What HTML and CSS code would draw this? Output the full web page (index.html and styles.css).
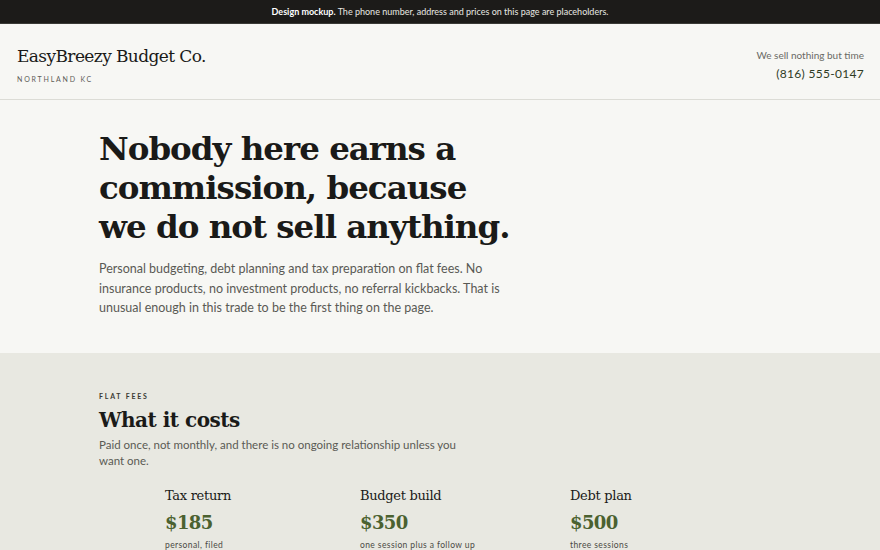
FILE: index.html
```html
<!DOCTYPE html>
<html lang="en">
<head>
  <meta charset="UTF-8">
  <meta name="viewport" content="width=device-width, initial-scale=1.0">
  <title>EasyBreezy Budget Co.</title>
  <link rel="stylesheet" href="styles.css">
</head>
<body>
  <div class="notice"><strong>Design mockup.</strong> The phone number, address and prices on this page are placeholders.</div>

  <header class="site-header">
    <div class="brand">
      <div class="brand-name">EasyBreezy Budget Co.</div>
      <div class="brand-place">Northland KC</div>
    </div>
    <div class="contact">
      <div class="tagline">We sell nothing but time</div>
      <div class="phone">(816) 555-0147</div>
    </div>
  </header>

  <section class="hero">
    <div class="container">
      <h1>Nobody here earns a commission, because we do not sell anything.</h1>
      <p class="lead">Personal budgeting, debt planning and tax preparation on flat fees. No insurance products, no investment products, no referral kickbacks. That is unusual enough in this trade to be the first thing on the page.</p>
    </div>
  </section>

  <section class="fees">
    <div class="container">
      <div class="eyebrow">Flat fees</div>
      <h2>What it costs</h2>
      <p class="intro">Paid once, not monthly, and there is no ongoing relationship unless you want one.</p>

      <div class="price-list">
        <div class="price">
          <h3>Tax return</h3>
          <div class="amount">$185</div>
          <div class="note">personal, filed</div>
        </div>
        <div class="price">
          <h3>Budget build</h3>
          <div class="amount">$350</div>
          <div class="note">one session plus a follow up</div>
        </div>
        <div class="price">
          <h3>Debt plan</h3>
          <div class="amount">$500</div>
          <div class="note">three sessions</div>
        </div>
      </div>
    </div>
  </section>
</body>
</html>
```

FILE: styles.css
```css
body {
  margin: 0;
  font-family: Lato, 'Open Sans', sans-serif;
  background: #f7f7f4;
  color: #1c1c1a;
}

.notice {
  height: 24px;
  line-height: 24px;
  background: #1c1b19;
  border-bottom: 1px solid #3a3a36;
  box-sizing: border-box;
  color: #e8e8e2;
  font-size: 9px;
  text-align: center;
}

.notice strong {
  color: #ffffff;
}

.site-header {
  display: flex;
  justify-content: space-between;
  align-items: center;
  height: 75px;
  padding: 0 16px 0 17px;
  border-bottom: 1px solid #dcdcd6;
}

.brand {
  margin-top: 5px;
}

.brand-name {
  font-family: 'DejaVu Serif', serif;
  font-size: 17px;
  letter-spacing: -0.6px;
  color: #1a1a18;
}

.brand-place {
  margin-top: 9px;
  font-size: 7px;
  letter-spacing: 1.8px;
  text-transform: uppercase;
  color: #5e5e58;
}

.contact {
  margin-top: 6px;
  text-align: right;
}

.tagline {
  font-size: 10px;
  color: #6a6a64;
}

.phone {
  margin-top: 5px;
  font-size: 12px;
  letter-spacing: 0.3px;
  color: #2f3b24;
}

.container {
  max-width: 682px;
  margin: 0 auto;
}

.hero {
  padding: 29px 0 35px;
}

.hero h1 {
  margin: 0;
  max-width: 416px;
  font-family: 'DejaVu Serif', serif;
  font-size: 32.5px;
  line-height: 39px;
  letter-spacing: -1px;
  font-weight: bold;
  color: #1a1a18;
}

.lead {
  margin: 13px 0 0;
  max-width: 405px;
  font-size: 12.5px;
  line-height: 19.5px;
  color: #5a5a54;
}

.fees {
  background: #e8e8e1;
  padding: 39px 0 20px;
}

.eyebrow {
  font-size: 7px;
  font-weight: 700;
  letter-spacing: 1.8px;
  text-transform: uppercase;
  color: #3a3a34;
}

.fees h2 {
  margin: 8px 0 0;
  font-family: 'DejaVu Serif', serif;
  font-size: 20px;
  letter-spacing: -0.5px;
  color: #1a1a18;
}

.intro {
  margin: 5px 0 0;
  max-width: 360px;
  font-size: 11.5px;
  line-height: 16.5px;
  color: #5a5a54;
}

.price-list {
  display: grid;
  grid-template-columns: 195px 210px 1fr;
  padding-left: 66px;
  margin-top: 18px;
}

.price h3 {
  margin: 0;
  font-family: 'DejaVu Serif', serif;
  font-size: 13px;
  font-weight: normal;
  letter-spacing: -0.3px;
  color: #1a1a18;
}

.amount {
  margin-top: 9px;
  font-family: 'DejaVu Serif', serif;
  font-size: 18px;
  font-weight: bold;
  letter-spacing: -0.6px;
  color: #4b6130;
}

.note {
  margin-top: 7px;
  font-size: 8.5px;
  letter-spacing: 0.4px;
  color: #4a4a44;
}
```
